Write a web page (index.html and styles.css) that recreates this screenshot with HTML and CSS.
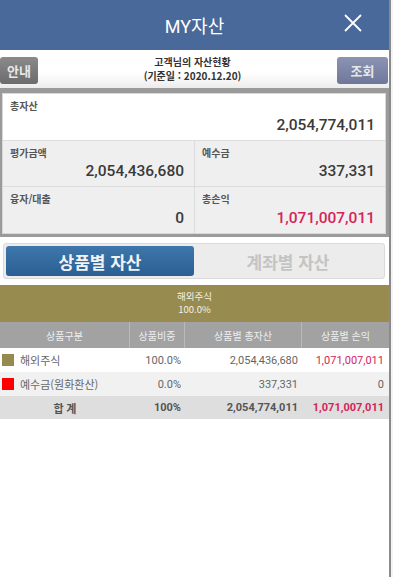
FILE: index.html
```html
<!DOCTYPE html>
<html lang="ko">
<head>
<meta charset="utf-8">
<link rel="stylesheet" href="styles.css">
</head>
<body>
<div class="app">
  <header class="topbar">
    <h1 class="title">MY자산</h1>
    <svg class="close" width="20" height="20" viewBox="0 0 20 20"><path d="M2 2 L18 18 M18 2 L2 18" stroke="#fff" stroke-width="1.8" fill="none"/></svg>
  </header>
  <div class="subbar">
    <button class="btn btn-info">안내</button>
    <div class="subtitle">
      <div class="sub1">고객님의 자산현황</div>
      <div class="sub2">(기준일 : 2020.12.20)</div>
    </div>
    <button class="btn btn-query">조회</button>
  </div>
  <div class="summary">
    <div class="sum-box">
      <div class="cell total">
        <div class="label">총자산</div>
        <div class="value">2,054,774,011</div>
      </div>
      <div class="grid">
        <div class="cell">
          <div class="label">평가금액</div>
          <div class="value">2,054,436,680</div>
        </div>
        <div class="cell">
          <div class="label">예수금</div>
          <div class="value">337,331</div>
        </div>
        <div class="cell">
          <div class="label">융자/대출</div>
          <div class="value">0</div>
        </div>
        <div class="cell">
          <div class="label">총손익</div>
          <div class="value red">1,071,007,011</div>
        </div>
      </div>
    </div>
  </div>
  <div class="tabs-wrap">
    <div class="tabs">
      <div class="tab active">상품별 자산</div>
      <div class="tab">계좌별 자산</div>
    </div>
  </div>
  <div class="chart-bar">
    <div>해외주식</div>
    <div>100.0%</div>
  </div>
  <div class="table">
    <div class="row head">
      <div class="c c1">상품구분</div>
      <div class="c c2">상품비중</div>
      <div class="c c3">상품별 총자산</div>
      <div class="c c4">상품별 손익</div>
    </div>
    <div class="row r1">
      <div class="c c1 name"><span class="sw olive"></span>해외주식</div>
      <div class="c c2 num">100.0%</div>
      <div class="c c3 num">2,054,436,680</div>
      <div class="c c4 num red">1,071,007,011</div>
    </div>
    <div class="row r2">
      <div class="c c1 name"><span class="sw redsw"></span>예수금(원화환산)</div>
      <div class="c c2 num">0.0%</div>
      <div class="c c3 num">337,331</div>
      <div class="c c4 num">0</div>
    </div>
    <div class="row sum">
      <div class="c c1 center">합 계</div>
      <div class="c c2 num">100%</div>
      <div class="c c3 num">2,054,774,011</div>
      <div class="c c4 num red">1,071,007,011</div>
    </div>
  </div>
</div>
</body>
</html>
```

FILE: styles.css
```css
* { box-sizing: border-box; }
html, body { margin: 0; padding: 0; }
body {
  width: 393px;
  height: 577px;
  background: #f4f4f4;
  font-family: "Roboto", "Noto Sans CJK KR", sans-serif;
  overflow: hidden;
}
.app {
  width: 391px;
  height: 577px;
  background: #fff;
  border-right: 2px solid #8a8a8a;
}
.topbar {
  height: 50px;
  background: #48699a;
  display: flex;
  align-items: center;
  justify-content: center;
  position: relative;
}
.title {
  margin: 0;
  color: #fff;
  font-size: 18px;
  font-weight: 400;
  font-family: "Roboto", "Noto Sans CJK KR", sans-serif;
}
.close {
  position: absolute;
  right: 26px;
  top: 13px;
}
.subbar {
  height: 38px;
  display: flex;
  align-items: center;
  justify-content: space-between;
  background: linear-gradient(#ffffff 60%, #ececec);
  padding: 0 1px 0 0;
}
.btn {
  border: none;
  height: 27px;
  border-radius: 3px;
  color: #e8e8e8;
  font-family: "Noto Sans CJK KR", sans-serif;
  font-size: 13px;
  font-weight: 700;
  padding: 0;
  margin-top: 2px;
}
.btn-info {
  width: 38px;
  background: linear-gradient(#8a8a8a, #6c6c6c);
}
.btn-query {
  width: 51px;
  background: linear-gradient(#8c94b4, #6e7898);
}
.subtitle {
  text-align: center;
  font-family: "Noto Sans CJK KR", sans-serif;
  font-weight: 700;
  color: #333;
  font-size: 10px;
  line-height: 14px;
  padding-left: 10px;
}
.summary {
  background: #9a9a9a;
  padding: 5px 3px 3px 2px;
}
.sum-box {
  background: #efefef;
  border: 1px solid #d8d8d8;
}
.cell {
  display: flex;
  flex-direction: column;
  padding: 6px 10px 6px 7px;
  height: 46px;
  background: #efefef;
}
.cell.total {
  background: #fff;
  height: 47px;
  border-bottom: 1px solid #dcdcdc;
}
.grid {
  display: grid;
  grid-template-columns: 192px 1fr;
}
.grid .cell { border-bottom: 1px solid #dcdcdc; }
.grid .cell:nth-child(odd) { border-right: 1px solid #dcdcdc; }
.grid .cell:nth-child(n+3) { border-bottom: none; }
.label {
  font-family: "Noto Sans CJK KR", sans-serif;
  font-size: 10px;
  font-weight: 700;
  color: #555;
  line-height: 12px;
}
.value {
  margin-top: auto;
  text-align: right;
  font-size: 15.5px;
  font-weight: 500;
  color: #3a3a3a;
  line-height: 18px;
}
.red { color: #d5245a; }
.tabs-wrap {
  padding: 6px 4px 6px 3px;
  background: #fff;
}
.tabs {
  display: flex;
  background: #ececec;
  border: 1px solid #dadada;
  border-radius: 3px;
  padding: 2px;
  height: 36px;
}
.tab {
  flex: 1;
  display: flex;
  align-items: center;
  justify-content: center;
  font-family: "Noto Sans CJK KR", sans-serif;
  font-weight: 700;
  font-size: 17px;
  color: #c4c4c4;
}
.tab.active {
  background: linear-gradient(#3e77ab, #2b5f94);
  color: #f2f2f2;
  border-radius: 3px;
}
.chart-bar {
  height: 37px;
  background: #988b4f;
  color: #f4f1e4;
  font-family: "Noto Sans CJK KR", sans-serif;
  font-size: 9.5px;
  line-height: 13px;
  text-align: center;
  padding-top: 5px;
}
.table {
  font-family: "Roboto", "Noto Sans CJK KR", sans-serif;
  font-size: 11px;
}
.row {
  display: grid;
  grid-template-columns: 130px 55px 117px 1fr;
  height: 24px;
  align-items: stretch;
}
.c {
  display: flex;
  align-items: center;
  padding: 0 4px;
  color: #666;
}
.row.head {
  background: #a2a2a2;
  height: 26px;
}
.row.head .c {
  justify-content: center;
  color: #eee;
  border-right: 1px solid #b9b9b9;
  font-family: "Noto Sans CJK KR", sans-serif;
  font-size: 10px;
}
.row.head .c:last-child { border-right: none; }
.r1 { background: #fff; }
.r2 { background: #f1f1f1; }
.row.sum { background: #dedede; height: 23px; }
.row.sum .c { font-weight: 700; color: #555; }
.num { justify-content: flex-end; }
.c4.num { padding-right: 5px; }
.center { justify-content: center; }
.name { font-family: "Noto Sans CJK KR", sans-serif; padding-left: 2px; color: #666; }
.sw {
  width: 12px;
  height: 12px;
  margin-right: 6px;
  display: inline-block;
}
.olive { background: #978a4e; }
.redsw { background: #f00; }
.row .c.red { color: #d5245a; }
```
